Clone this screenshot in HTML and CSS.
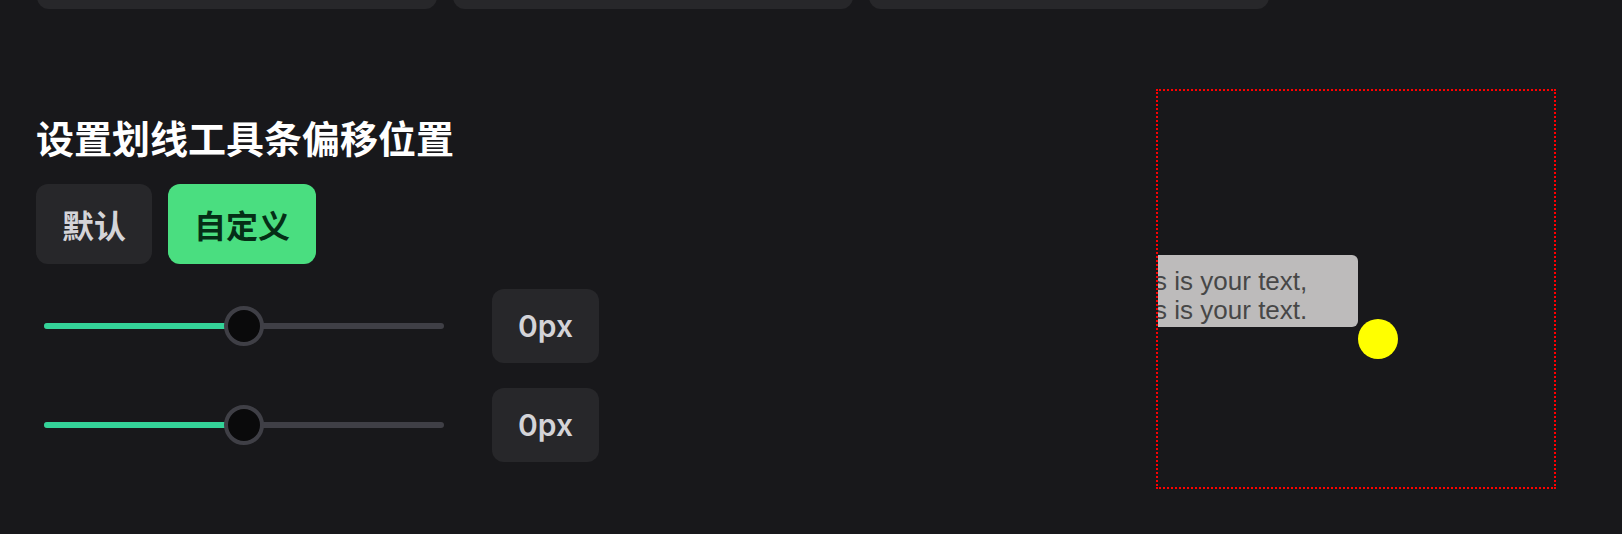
FILE: index.html
```html
<!DOCTYPE html>
<html lang="zh-CN">
<head>
<meta charset="utf-8">
<title>设置划线工具条偏移位置</title>
<link rel="stylesheet" href="styles.css">
</head>
<body>
<div class="top-cards">
  <div class="card"></div>
  <div class="card"></div>
  <div class="card"></div>
</div>
<div class="main">
  <section class="settings">
    <h2 class="title">设置划线工具条偏移位置</h2>
    <div class="modes">
      <button class="mode">默认</button>
      <button class="mode active">自定义</button>
    </div>
    <div class="row">
      <div class="slider">
        <div class="track"><div class="fill" style="width:50%"></div></div>
        <div class="thumb" style="left:50%"></div>
      </div>
      <div class="value">0px</div>
    </div>
    <div class="row">
      <div class="slider">
        <div class="track"><div class="fill" style="width:50%"></div></div>
        <div class="thumb" style="left:50%"></div>
      </div>
      <div class="value">0px</div>
    </div>
  </section>
  <div class="preview">
    <div class="tooltip">This is your text, This is your text.</div>
    <div class="dot"></div>
  </div>
</div>
</body>
</html>
```
FILE: styles.css
```css
* { box-sizing: border-box; }
html, body { margin: 0; padding: 0; }
body {
  background: #18181b;
  width: 1622px;
  height: 534px;
  overflow: hidden;
  font-family: "Inter", "Noto Sans CJK SC", sans-serif;
}
.top-cards {
  display: flex;
  gap: 16px;
  padding-left: 37px;
  margin-top: -51px;
}
.card {
  width: 400px;
  height: 60px;
  background: #27272a;
  border-radius: 12px;
}
.main {
  display: flex;
  justify-content: space-between;
  align-items: flex-start;
  padding: 0 66px 0 36px;
  margin-top: 80px;
}
.settings {
  display: flex;
  flex-direction: column;
  padding-top: 24px;
}
.title {
  margin: 0;
  font-family: "Noto Sans CJK SC", sans-serif;
  font-size: 38px;
  font-weight: 700;
  line-height: 48px;
  color: #ffffff;
}
.modes {
  display: flex;
  gap: 16px;
  margin-top: 23px;
}
.mode {
  height: 80px;
  padding: 0 26px;
  border: none;
  border-radius: 12px;
  background: #27272a;
  color: #d4d4d8;
  font-family: "Noto Sans CJK SC", sans-serif;
  font-size: 32px;
  font-weight: 700;
  line-height: 1;
}
.mode.active {
  background: #4ade80;
  color: #052e16;
}
.row {
  display: flex;
  align-items: center;
  gap: 48px;
  margin-top: 25px;
}
.slider {
  position: relative;
  width: 400px;
  height: 40px;
  margin-left: 8px;
  display: flex;
  align-items: center;
}
.track {
  width: 100%;
  height: 6px;
  border-radius: 3px;
  background: #3f3f46;
  overflow: hidden;
}
.fill {
  height: 100%;
  background: #34d399;
}
.thumb {
  position: absolute;
  top: 0;
  width: 40px;
  height: 40px;
  margin-left: -20px;
  border-radius: 50%;
  background: #0a0a0b;
  border: 4px solid #3f3f46;
}
.value {
  width: 107px;
  height: 74px;
  border-radius: 12px;
  background: #27272a;
  color: #d4d4d8;
  font-size: 30px;
  font-weight: 600;
  display: flex;
  align-items: center;
  justify-content: center;
}
.preview {
  position: relative;
  width: 400px;
  height: 400px;
  border: 2px dotted #ff0000;
  overflow: hidden;
}
.tooltip {
  position: absolute;
  left: -52px;
  top: 164px;
  width: 252px;
  height: 72px;
  padding: 12px 12px 2px;
  background: #bdbbbb;
  border-radius: 6px;
  color: #474747;
  font-family: "Liberation Sans", Arial, sans-serif;
  font-size: 26px;
  line-height: 29px;
}
.dot {
  position: absolute;
  left: 200px;
  top: 228px;
  width: 40px;
  height: 40px;
  border-radius: 50%;
  background: #ffff00;
}
```
